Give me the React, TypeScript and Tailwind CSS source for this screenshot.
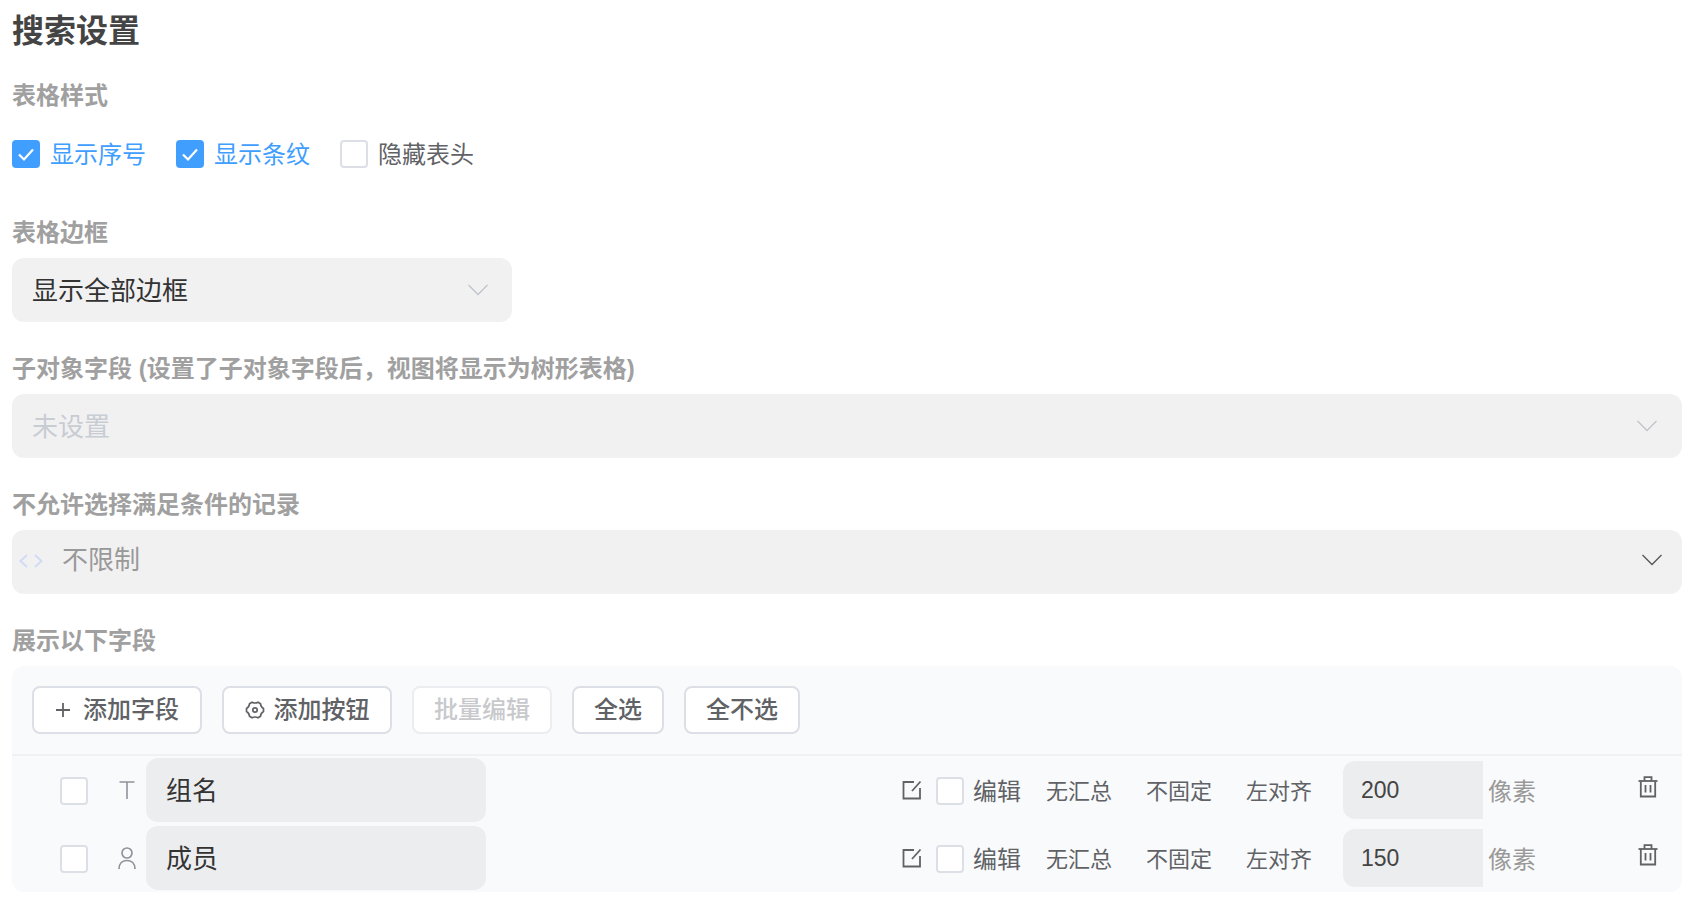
const font = "font-['Liberation_Sans','Noto_Sans_CJK_SC',sans-serif]";

function Chevron({ className }: { className: string }) {
  return (
    <svg viewBox="0 0 20 12" fill="none" stroke="currentColor" strokeWidth="1.3" className={className}>
      <path d="M0.5 1 L10 10.5 L19.5 1" />
    </svg>
  );
}

function Check() {
  return (
    <svg viewBox="0 0 28 28" fill="none" stroke="#fff" strokeWidth="2.2" className="w-7 h-7">
      <path d="M7 14.5 L12 19.5 L21 9.5" />
    </svg>
  );
}

function Box({ checked }: { checked?: boolean }) {
  if (checked) {
    return (
      <span className="block w-7 h-7 shrink-0 rounded bg-[#409eff]">
        <Check />
      </span>
    );
  }
  return <span className="block w-7 h-7 shrink-0 rounded border-2 border-[#dcdfe6] bg-white" />;
}

function Label({ children }: { children: React.ReactNode }) {
  return <div className="h-9 leading-[37px] mb-2 text-[24px] font-semibold text-[#a0a0a0]">{children}</div>;
}

function Button({ children, disabled, w }: { children: React.ReactNode; disabled?: boolean; w: string }) {
  return (
    <button
      type="button"
      className={`${w} h-12 rounded-lg border-2 bg-white flex items-center justify-center text-[24px] font-medium ${
        disabled ? "border-[#ebedf0] text-[#c8c9cc]" : "border-[#dcdfe6] text-[#606266]"
      }`}
    >
      {children}
    </button>
  );
}

function EditIcon() {
  return (
    <svg viewBox="0 0 20 20" fill="none" stroke="#606266" strokeWidth="1.8" className="block w-5 h-5 shrink-0 -translate-x-px">
      <path d="M12 2 H1.5 V18.5 H18 V8" />
      <path d="M18.5 1.5 L10 11" />
    </svg>
  );
}

function TrashIcon() {
  return (
    <svg viewBox="0 0 20 22" fill="none" stroke="#606266" strokeWidth="1.8" className="block w-5 h-[22px] shrink-0 -translate-y-[3px]">
      <path d="M0.5 5 H19.5" />
      <path d="M6.5 5 V1.2 H13.5 V5" />
      <path d="M2.8 5 V20.5 H17.2 V5" />
      <path d="M7.5 9 V16.5 M12.5 9 V16.5" />
    </svg>
  );
}

function FieldRow({ icon, name, width }: { icon: React.ReactNode; name: string; width: string }) {
  return (
    <div className="h-[68px] flex items-center">
      <span className="ml-12 mt-0.5">
        <Box />
      </span>
      <span className="ml-[30px] w-[18px] flex justify-center">{icon}</span>
      <div className="ml-[10px] w-[340px] h-16 rounded-xl bg-[#ecedef] pl-5 flex items-center text-[26px] text-[#333]">
        <span className="translate-y-px">{name}</span>
      </div>
      <span className="ml-[417px]">
        <EditIcon />
      </span>
      <span className="ml-[13px] mt-0.5">
        <Box />
      </span>
      <span className="ml-[9px] w-12 text-[24px] text-[#606266] mt-1">编辑</span>
      <span className="ml-[25px] w-[66px] text-[22px] text-[#606266] mt-0.5">无汇总</span>
      <span className="ml-[34px] w-[66px] text-[22px] text-[#606266] mt-0.5">不固定</span>
      <span className="ml-[34px] w-[66px] text-[22px] text-[#606266] mt-0.5">左对齐</span>
      <div className="ml-[31px] w-[140px] h-[58px] rounded-l-xl bg-[#ecedef] pl-[18px] flex items-center text-[23px] text-[#444]">
        {width}
      </div>
      <span className="ml-[5px] w-12 text-[24px] text-[#999] mt-1">像素</span>
      <span className="ml-[102px]">
        <TrashIcon />
      </span>
    </div>
  );
}

export default function App() {
  return (
    <div className={`${font} w-[1696px] h-[914px] bg-white pl-3 pr-[14px] overflow-hidden`}>
      <h1 className="h-[60px] leading-[62px] mb-[17px] text-[32px] font-semibold text-[#444]">搜索设置</h1>

      <Label>表格样式</Label>
      <div className="h-[66px] mb-[27px] flex items-center text-[24px]">
        <Box checked />
        <span className="ml-[10px] w-24 text-[#409eff] translate-y-px">显示序号</span>
        <span className="ml-[30px]">
          <Box checked />
        </span>
        <span className="ml-[10px] w-24 text-[#409eff] translate-y-px">显示条纹</span>
        <span className="ml-[30px]">
          <Box />
        </span>
        <span className="ml-[10px] w-24 text-[#606266] translate-y-px">隐藏表头</span>
      </div>

      <Label>表格边框</Label>
      <div className="w-[500px] h-16 mb-7 rounded-xl bg-[#f1f1f2] pl-5 pr-6 flex items-center justify-between text-[26px] text-[#333]">
        <span className="translate-y-px">显示全部边框</span>
        <Chevron className="w-5 h-3 text-[#c0c4cc]" />
      </div>

      <Label>子对象字段 (设置了子对象字段后，视图将显示为树形表格)</Label>
      <div className="h-16 mb-7 rounded-xl bg-[#f1f1f2] pl-5 pr-[25px] flex items-center justify-between text-[26px] text-[#c8ccd3]">
        <span className="translate-y-px">未设置</span>
        <Chevron className="w-5 h-3 text-[#c0c4cc]" />
      </div>

      <Label>不允许选择满足条件的记录</Label>
      <div className="h-16 mb-7 rounded-xl bg-[#f1f1f2] pl-[7px] pr-5 flex items-center text-[26px] text-[#999]">
        <svg viewBox="0 0 24 14" fill="none" stroke="#d0dcf5" strokeWidth="2" className="w-6 h-[14px] -translate-y-px">
          <path d="M8 1 L1.5 7 L8 13" />
          <path d="M16 1 L22.5 7 L16 13" />
        </svg>
        <span className="ml-[19px] -translate-y-0.5">不限制</span>
        <Chevron className="w-5 h-3 ml-auto text-[#555] -translate-y-0.5" />
      </div>

      <Label>展示以下字段</Label>
      <div className="h-[226px] rounded-xl bg-[#f9fafb]">
        <div className="h-[90px] border-b-2 border-[#f0f1f3] flex items-start gap-5 pt-5 pl-5">
          <Button w="w-[170px]">
            <svg viewBox="0 0 16 16" fill="none" stroke="currentColor" strokeWidth="1.8" className="w-4 h-4 mr-[12px]">
              <path d="M8 1 V15 M1 8 H15" />
            </svg>
            添加字段
          </Button>
          <Button w="w-[170px]">
            <svg viewBox="0 0 20 20" fill="none" stroke="currentColor" strokeWidth="1.7" className="w-5 h-5 mr-[9px]">
              <path d="M7 2.2 C8.5 3 11.5 3 13 2.2 L15.5 3.8 C15.6 5.5 17 7.8 18.5 8.6 V11.4 C17 12.2 15.6 14.5 15.5 16.2 L13 17.8 C11.5 17 8.5 17 7 17.8 L4.5 16.2 C4.4 14.5 3 12.2 1.5 11.4 V8.6 C3 7.8 4.4 5.5 4.5 3.8 Z" strokeLinejoin="round" />
              <circle cx="10" cy="10" r="2.2" />
            </svg>
            添加按钮
          </Button>
          <Button w="w-[140px]" disabled>
            批量编辑
          </Button>
          <Button w="w-[92px]">全选</Button>
          <Button w="w-[116px]">全不选</Button>
        </div>
        <FieldRow
          name="组名"
          width="200"
          icon={
            <svg viewBox="0 0 16 18" fill="none" stroke="#909399" strokeWidth="1.6" className="w-4 h-[18px]">
              <path d="M0.5 1 H15.5 M8 1 V18" />
            </svg>
          }
        />
        <FieldRow
          name="成员"
          width="150"
          icon={
            <svg viewBox="0 0 18 23" fill="none" stroke="#909399" strokeWidth="1.7" className="w-[18px] h-[23px]">
              <circle cx="9" cy="6" r="5" />
              <path d="M1 22 C1 16.5 4.5 13.5 9 13.5 C13.5 13.5 17 16.5 17 22" />
            </svg>
          }
        />
      </div>
    </div>
  );
}
